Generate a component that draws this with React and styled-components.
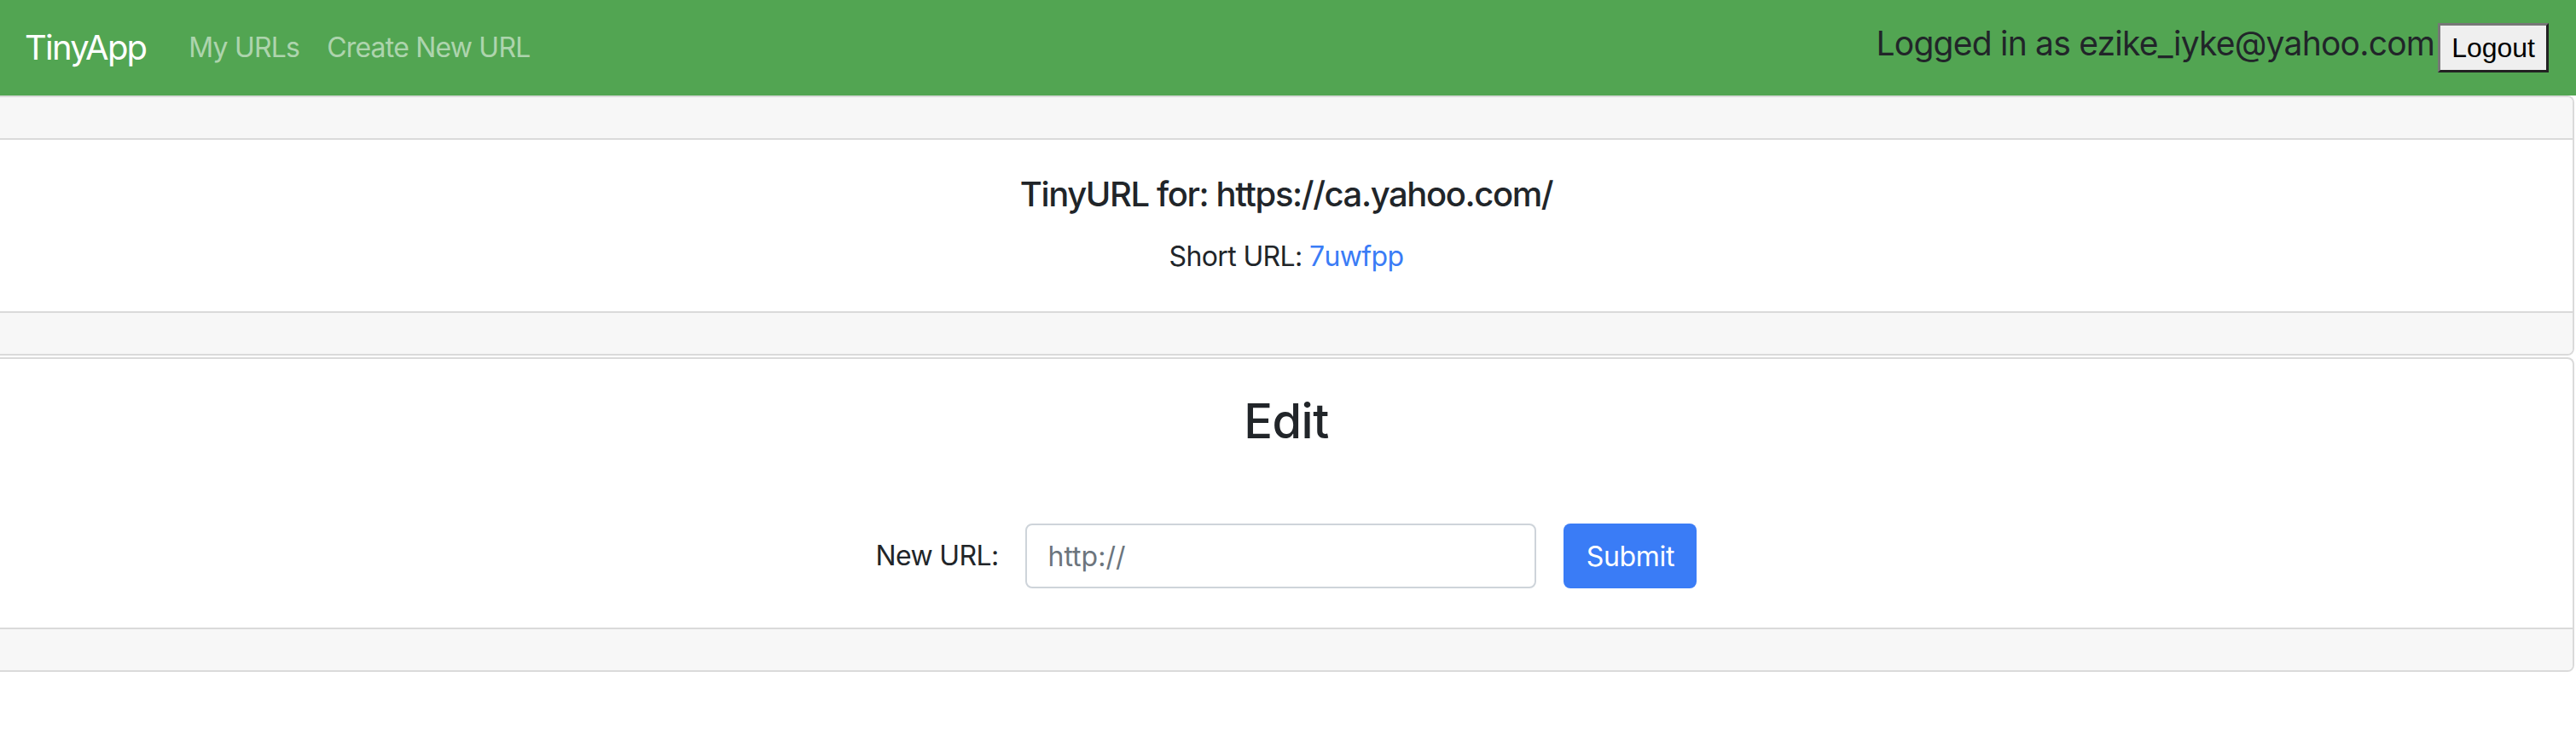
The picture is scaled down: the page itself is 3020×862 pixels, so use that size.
import React from "react";
import styled, { createGlobalStyle } from "styled-components";

const GlobalStyle = createGlobalStyle`
  * {
    box-sizing: border-box;
  }
  body {
    margin: 0;
    background: #ffffff;
    color: #212529;
    font-family: Inter, "Noto Sans", sans-serif;
  }
`;

export default function App() {
  return (
    <>
      <GlobalStyle />
      <Navbar>
        <Brand href="#">TinyApp</Brand>
        <NavList>
          <NavLink href="#">My URLs</NavLink>
          <NavLink href="#">Create New URL</NavLink>
        </NavList>
        <UserBox>
          <UserText>Logged in as ezike_iyke@yahoo.com</UserText>
          <LogoutButton>Logout</LogoutButton>
        </UserBox>
      </Navbar>

      <Card>
        <CardHeader />
        <CardBody>
          <CardTitle>TinyURL for: https://ca.yahoo.com/</CardTitle>
          <CardText>
            Short URL: <ShortLink href="#">7uwfpp</ShortLink>
          </CardText>
        </CardBody>
        <CardFooter />
      </Card>

      <Card>
        <CardBody>
          <EditTitle>Edit</EditTitle>
          <EditForm onSubmit={(e) => e.preventDefault()}>
            <Label htmlFor="longURL">New URL:</Label>
            <UrlInput id="longURL" type="text" placeholder="http://" />
            <SubmitButton type="submit">Submit</SubmitButton>
          </EditForm>
        </CardBody>
        <CardFooter />
      </Card>
    </>
  );
}

const Navbar = styled.nav`
  display: flex;
  align-items: center;
  height: 112px;
  padding: 0 32px 0 29px;
  background-color: #52a552;
`;

const Brand = styled.a`
  font-size: 40px;
  line-height: 60px;
  letter-spacing: -0.045em;
  color: #ffffff;
  text-decoration: none;
  margin-right: 34px;
`;

const NavList = styled.div`
  display: flex;
  align-items: center;
`;

const NavLink = styled.a`
  padding: 0 16px;
  font-size: 32px;
  line-height: 48px;
  letter-spacing: -0.025em;
  color: rgba(255, 255, 255, 0.55);
  text-decoration: none;
`;

const UserBox = styled.div`
  margin-left: auto;
  display: flex;
  align-items: center;
  gap: 4px;
`;

const UserText = styled.span`
  font-size: 39px;
  line-height: 48px;
  letter-spacing: -0.02em;
  color: #212529;
  margin-bottom: 10px;
`;

const LogoutButton = styled.button`
  height: 58px;
  padding: 0 13px;
  background: #efefef;
  color: #000000;
  font-family: "Liberation Sans", Arial, sans-serif;
  font-size: 32px;
  border: 3px solid;
  border-color: #777777 #222222 #222222 #777777;
`;

const Card = styled.section`
  display: flex;
  flex-direction: column;
  margin: 0 2px 2px 0;
  border: 2px solid #dadada;
  border-left: none;
  border-radius: 0 8px 8px 0;
  background: #ffffff;
  overflow: hidden;
`;

const CardHeader = styled.div`
  height: 50px;
  background: #f7f7f7;
  border-bottom: 2px solid #dadada;
`;

const CardFooter = styled.div`
  height: 50px;
  background: #f7f7f7;
  border-top: 2px solid #dadada;
`;

const CardBody = styled.div`
  padding: 40px;
  text-align: center;
`;

const CardTitle = styled.h5`
  margin: 0 0 25px;
  font-size: 40px;
  font-weight: 500;
  line-height: 48px;
  letter-spacing: -0.035em;
`;

const CardText = styled.p`
  margin: 0;
  font-size: 32px;
  line-height: 48px;
  letter-spacing: -0.02em;
`;

const ShortLink = styled.a`
  color: #3a7cf6;
  text-decoration: none;
`;

const EditTitle = styled.h3`
  margin: 0 0 16px;
  font-size: 56px;
  font-weight: 500;
  line-height: 67px;
  letter-spacing: -0.01em;
`;

const EditForm = styled.form`
  display: flex;
  justify-content: center;
  align-items: center;
  gap: 32px;
  margin: 86px 0 6px;
`;

const Label = styled.label`
  font-size: 32px;
  line-height: 48px;
  letter-spacing: -0.02em;
  color: #212529;
`;

const UrlInput = styled.input`
  width: 599px;
  height: 76px;
  padding: 0 24px;
  border: 2px solid #ced4da;
  border-radius: 8px;
  font-family: Inter, sans-serif;
  font-size: 32px;
  color: #495057;
  outline: none;

  &::placeholder {
    color: #6c757d;
  }
`;

const SubmitButton = styled.button`
  width: 156px;
  height: 76px;
  border: none;
  border-radius: 8px;
  background: #3a7cf6;
  color: #ffffff;
  font-family: Inter, sans-serif;
  font-size: 32px;
  letter-spacing: -0.01em;
`;
